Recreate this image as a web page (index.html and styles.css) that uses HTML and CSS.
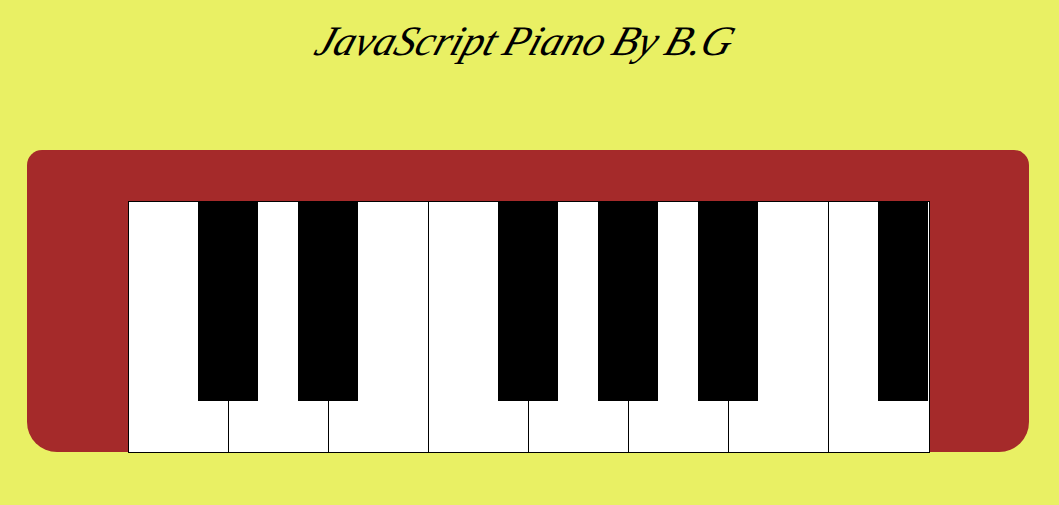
FILE: index.html
```html
<!DOCTYPE html>
<html lang="en">
<head>
  <meta charset="UTF-8">
  <meta name="viewport" content="width=device-width, initial-scale=1.0">
  <title>JavaScript Piano</title>
  <link rel="stylesheet" href="styles.css">
</head>
<body>
  <h1 class="title"><span class="title-text">JavaScript Piano By B.G</span></h1>

  <!-- Piano body -->
  <div class="piano">
    <div class="keys">
      <div class="white-key"><div class="black-key"></div></div>
      <div class="white-key"><div class="black-key"></div></div>
      <div class="white-key"></div>
      <div class="white-key"><div class="black-key"></div></div>
      <div class="white-key"><div class="black-key"></div></div>
      <div class="white-key"><div class="black-key"></div></div>
      <div class="white-key"></div>
      <div class="white-key last"><div class="black-key"></div></div>
    </div>
  </div>
</body>
</html>
```

FILE: styles.css
```css
/* General styling */
body {
  margin: 0;
  height: 505px;
  overflow: hidden;
  background-color: #e9f064;
}

.title {
  margin: 0;
  padding-top: 16px;
  height: 150px;
  box-sizing: border-box;
  text-align: center;
  font-family: "Liberation Serif", "Times New Roman", serif;
  font-size: 42px;
  font-style: italic;
  font-weight: normal;
  line-height: 50px;
  color: #000;
}

.title-text {
  display: inline-block;
  padding-right: 8px;
  word-spacing: -2px;
  transform: skewX(-18deg);
}

/* Piano body */
.piano {
  display: flex;
  box-sizing: border-box;
  width: 1002px;
  height: 302px;
  margin-left: 27px;
  padding: 51px 0 0 101px;
  background-color: #a52a2a;
  border-radius: 15px 15px 30px 30px;
}

.keys {
  display: flex;
  height: 252px;
  box-sizing: border-box;
  border-top: 1px solid #000;
  border-bottom: 1px solid #000;
}

.white-key {
  position: relative;
  width: 100px;
  box-sizing: border-box;
  background-color: #fff;
  border-left: 1px solid #000;
}

.black-key {
  position: absolute;
  z-index: 1;
  top: 0;
  left: 69px;
  width: 60px;
  height: 199px;
  background-color: #000;
}

.white-key.last {
  width: 102px;
  border-right: 1px solid #000;
}

.white-key.last .black-key {
  left: 49px;
  width: 50px;
}
```
